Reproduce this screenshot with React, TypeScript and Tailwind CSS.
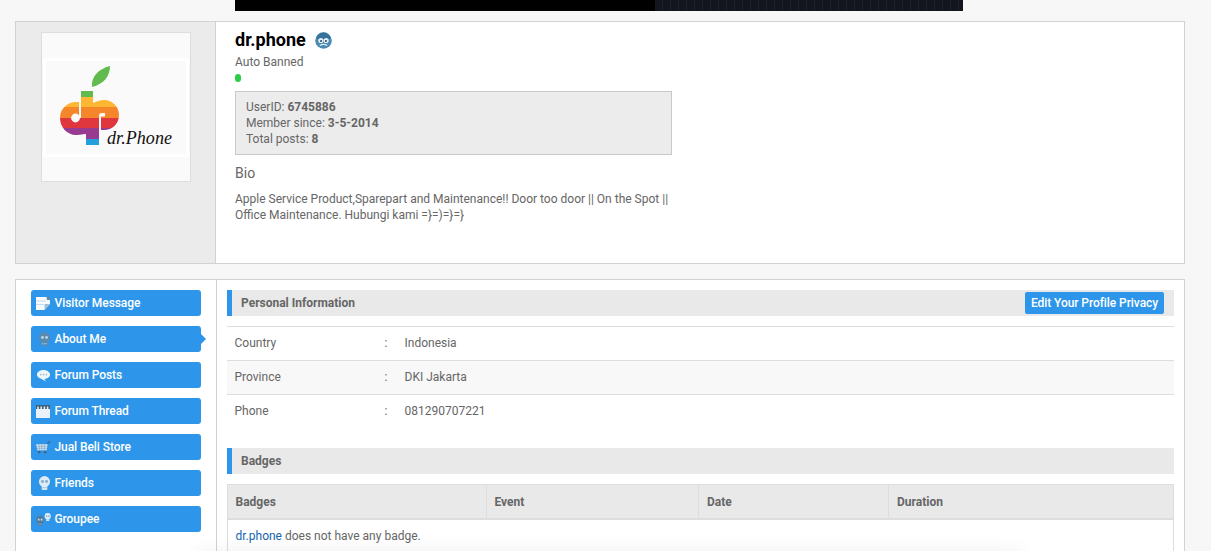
import React from "react";

function Logo() {
  return (
    <svg viewBox="42 33 148 148" className="block w-[148px] h-[148px]">
      <rect x="42" y="33" width="148" height="148" fill="#fafafa" />
      <rect x="43" y="58" width="146" height="99" fill="#ffffff" />
      <rect x="46" y="61" width="140" height="93" fill="#fafafa" />
      <path d="M92 87 C91 77 98 69 110 66 C110 76 104 84 92 87Z" fill="#62bb4f" />
      <defs>
        <clipPath id="dp">
          <path d="M81 91 H93 V103 C97 101 101 100 104 100 C113 100 119 107 119 115 C119 124 112 130 104 130 H99 V145 H86 V134 C83 134 81 135 76 135 C67 135 60 127 60 118 C60 109 67 102 76 102 H81 Z" />
        </clipPath>
      </defs>
      <g clipPath="url(#dp)" shapeRendering="crispEdges">
        <rect x="55" y="88" width="70" height="9" fill="#62bb4f" />
        <rect x="55" y="97" width="70" height="10" fill="#fdb733" />
        <rect x="55" y="107" width="70" height="11" fill="#f6862a" />
        <rect x="55" y="118" width="70" height="10" fill="#e0363d" />
        <rect x="55" y="128" width="70" height="11" fill="#973a90" />
        <rect x="55" y="139" width="70" height="7" fill="#239fdb" />
      </g>
      <rect x="79" y="91" width="2" height="27" fill="#fafafa" />
      <circle cx="75.5" cy="118" r="4.4" fill="#fafafa" />
      <path d="M99 130.5 V115.5 Q99 113 102 113 H105 V116.5 H101 V130.5Z" fill="#fafafa" />
      <text x="107" y="144" fontFamily="'Liberation Serif', serif" fontStyle="italic" fontSize="18" fill="#111" textLength="65" lengthAdjust="spacing">dr.Phone</text>
    </svg>
  );
}

function Head({ fill, eye }: { fill: string; eye: string }) {
  return (
    <>
      <circle cx="8" cy="6.2" r="5.2" fill={fill} />
      <rect x="5.3" y="10" width="5.4" height="4.2" rx="1" fill={fill} />
      <circle cx="6.1" cy="6.2" r="1.4" fill={eye} />
      <circle cx="9.9" cy="6.2" r="1.4" fill={eye} />
      <path d="M5.3 12 H10.7" stroke={eye} strokeWidth="0.6" />
    </>
  );
}

const icons: Record<string, React.ReactNode> = {
  note: (
    <svg viewBox="0 0 14 13" className="w-[14px] h-[13px]">
      <path d="M0 0 H14 V7 L8.5 13 H0Z" fill="#f7fafd" />
      <path d="M10.5 0 H14 V3 H11Z" fill="#5f87a6" />
      <path d="M0 4 H10 M0 7.5 H8" stroke="#c6dcee" strokeWidth="1" />
      <path d="M8.5 13 L14 7 H9.5 Q8.5 7 8.5 8Z" fill="#9dbdd4" />
    </svg>
  ),
  me: (
    <svg viewBox="0 0 16 16" className="w-[17px] h-[17px] -ml-[0.5px]">
      <Head fill="#5a8ab0" eye="#b6d2e6" />
    </svg>
  ),
  posts: (
    <svg viewBox="0 0 16 16" className="w-[15px] h-[15px]">
      <path d="M8 2 C12.2 2 15 4.4 15 7 C15 9.6 12.4 11.6 9 11.7 L10.5 14.5 L6 11.6 C3.2 11.2 1 9.4 1 7 C1 4.4 3.8 2 8 2Z" fill="#eef5fb" />
      <circle cx="5" cy="7" r="0.9" fill="#9dbdd4" />
      <circle cx="8" cy="7" r="0.9" fill="#9dbdd4" />
      <circle cx="11" cy="7" r="0.9" fill="#9dbdd4" />
    </svg>
  ),
  thread: (
    <svg viewBox="0 0 14 13" className="w-[14px] h-[13px]">
      <rect x="0" y="0" width="14" height="13" fill="#e9f2f9" />
      <rect x="0" y="0" width="14" height="4" fill="#3d5f7a" />
      <path d="M2 1.5 V4.5 M5.2 1.5 V4.5 M8.4 1.5 V4.5 M11.6 1.5 V4.5" stroke="#e9f2f9" strokeWidth="1.5" />
    </svg>
  ),
  cart: (
    <svg viewBox="0 0 16 14" className="w-[15px] h-[13px]">
      <path d="M0 3.5 H12.5 L11.3 10 H1.5Z" fill="#d6e6f3" />
      <path d="M3 3.5 L3.6 10 M6.2 3.5 V10 M9.4 3.5 L8.9 10 M0.6 5.7 H12 M1 7.9 H11.6" stroke="#6e9abb" strokeWidth="0.6" />
      <path d="M12.5 3.5 L13.2 1 H15.8" stroke="#3d5f7a" strokeWidth="1.1" fill="none" />
      <circle cx="3.5" cy="12" r="1.3" fill="#3d5f7a" />
      <circle cx="9.8" cy="12" r="1.3" fill="#3d5f7a" />
    </svg>
  ),
  friends: (
    <svg viewBox="0 0 16 16" className="w-[17px] h-[17px] -ml-[0.5px]">
      <Head fill="#dcebf6" eye="#86aecb" />
    </svg>
  ),
  group: (
    <svg viewBox="0 0 21 17" className="w-[16px] h-[13px]">
      <g transform="translate(9 -1) scale(0.8)">
        <Head fill="#dcebf6" eye="#86aecb" />
      </g>
      <g transform="translate(-2.5 2.5)">
        <Head fill="#4f7a99" eye="#b6d2e6" />
      </g>
    </svg>
  ),
};

const nav = [
  ["Visitor Message", "note"],
  ["About Me", "me"],
  ["Forum Posts", "posts"],
  ["Forum Thread", "thread"],
  ["Jual Beli Store", "cart"],
  ["Friends", "friends"],
  ["Groupee", "group"],
];

function SectionHead({ title, children }: { title: string; children?: React.ReactNode }) {
  return (
    <div className="h-[26px] flex items-center justify-between bg-[#e9e9e9] border-l-[5px] border-[#2e96ea] pl-[9px] pr-[10px]">
      <span className="text-[12px] font-bold text-[#666666]">{title}</span>
      {children}
    </div>
  );
}

const rows = [
  ["Country", "Indonesia"],
  ["Province", "DKI Jakarta"],
  ["Phone", "081290707221"],
];

const cols = [
  ["Badges", "w-[259px] pl-[7.5px]"],
  ["Event", "w-[212px] pl-[7.5px]"],
  ["Date", "w-[190px] pl-[8px]"],
  ["Duration", "flex-1 pl-[8px]"],
];

const bio = "Apple Service Product,Sparepart and Maintenance!! Door too door || On the Spot || Office Maintenance. Hubungi kami =}=)=}=}";

export default function App() {
  return (
    <div className="h-[551px] overflow-hidden bg-[#f7f7f7] font-['Roboto',sans-serif] text-[12px] text-[#666666] relative">
      <div className="flex h-[11px] ml-[235px] w-[728px]">
        <div className="w-[420px] bg-black" />
        <div className="flex-1 bg-[#13161e] bg-[repeating-linear-gradient(90deg,#13161e_0,#13161e_7px,#1d212b_7px,#1d212b_8px)]" />
      </div>

      <div className="mt-[10px] ml-[15px] w-[1170px] h-[243px] flex border border-[#d2d2d2] bg-white">
        <div className="w-[200px] shrink-0 bg-[#ebebeb] border-r border-[#d2d2d2] pt-[10px] pl-[25px]">
          <div className="w-[150px] h-[150px] border border-[#dddddd] bg-[#fafafa]">
            <Logo />
          </div>
        </div>
        <div className="pl-[19px] pt-[6px]">
          <div className="flex items-center h-[24px]">
            <span className="text-[18px] leading-[24px] font-bold text-black">dr.phone</span>
            <svg viewBox="0 0 16 16" className="w-[17px] h-[17px] ml-[9px]">
              <circle cx="8" cy="8" r="7.8" fill="#4a8ab3" />
              <path d="M1.5 6.5 A6.5 6 0 0 1 14.5 6.5 Z" fill="#35739c" />
              <circle cx="5.5" cy="8" r="2.4" fill="#e4eff6" />
              <circle cx="10.5" cy="8" r="2.4" fill="#e4eff6" />
              <circle cx="5.7" cy="8.4" r="0.9" fill="#1f3d55" />
              <circle cx="10.3" cy="8.4" r="0.9" fill="#1f3d55" />
              <path d="M4.5 12.6 Q8 10.6 11.5 12.6" stroke="#e4eff6" strokeWidth="1.1" fill="none" />
            </svg>
          </div>
          <div className="mt-[2px] leading-[16px]">Auto Banned</div>
          <div className="mt-[4px] w-[6px] h-[8px] rounded-full bg-[#2ecc4a]" />
          <div className="mt-[9px] w-[437px] h-[64px] border border-[#c8c8c8] bg-[#ececec] pl-[10px] pt-[7px] leading-[16px]">
            <div>UserID: <b>6745886</b></div>
            <div>Member since: <b>3-5-2014</b></div>
            <div>Total posts: <b>8</b></div>
          </div>
          <div className="mt-[9px] text-[14px] leading-[18px]">Bio</div>
          <p className="mt-[9px] w-[440px] leading-[16px]">{bio}</p>
        </div>
      </div>

      <div className="mt-[15px] ml-[15px] w-[1170px] h-[400px] flex border border-[#d2d2d2] bg-white">
        <div className="w-[201px] shrink-0 border-r border-[#d2d2d2] pt-[10px] pl-[15px] flex flex-col gap-[10px]">
          {nav.map(([label, icon]) => (
            <div key={label} className="relative w-[170px] h-[26px] rounded-[3px] bg-[#2e96ea] flex items-center text-white font-medium tracking-[-0.07px]">
              <span className="w-[23.5px] pl-[5px] flex justify-start shrink-0">{icons[icon]}</span>
              {label}
              {label === "About Me" && (
                <span className="absolute right-[-5px] top-[8px] border-y-[5px] border-y-transparent border-l-[5px] border-l-[#2e96ea]" />
              )}
            </div>
          ))}
        </div>
        <div className="flex-1 pt-[10px] pl-[10px] pr-[10px]">
          <SectionHead title="Personal Information">
            <span className="h-[22px] w-[139px] rounded-[2px] bg-[#2e96ea] text-white font-medium tracking-[-0.07px] flex items-center justify-center">
              Edit Your Profile Privacy
            </span>
          </SectionHead>
          <div className="mt-[10px] border-t border-[#dddddd]">
            {rows.map(([k, v], i) => (
              <div key={k} className={`flex items-center pl-[7.5px] pb-[1px] ${i < 2 ? "h-[34px] border-b border-[#dddddd]" : "h-[33px]"} ${i === 1 ? "bg-[#f8f8f8]" : ""}`}>
                <span className="w-[150px]">{k}</span>
                <span className="w-[20px]">:</span>
                <span>{v}</span>
              </div>
            ))}
          </div>
          <div className="mt-[20px]">
            <SectionHead title="Badges" />
          </div>
          <div className="mt-[10px] border border-[#dddddd]">
            <div className="h-[35px] flex bg-[#e9e9e9] border-b-2 border-[#dddddd]">
              {cols.map(([c, w], i) => (
                <div key={c} className={`${w} flex items-center font-bold text-[#666666] ${i < 3 ? "border-r border-[#dddddd]" : ""}`}>{c}</div>
              ))}
            </div>
            <div className="h-[32px] flex items-center pl-[7.5px]">
              <span><span className="text-[#1565b0]">dr.phone</span> does not have any badge.</span>
            </div>
          </div>
        </div>
      </div>

      <div className="absolute left-[200px] right-[190px] top-[558px] h-[40px] shadow-[0_0_24px_rgba(0,0,0,0.12)]" />
    </div>
  );
}
